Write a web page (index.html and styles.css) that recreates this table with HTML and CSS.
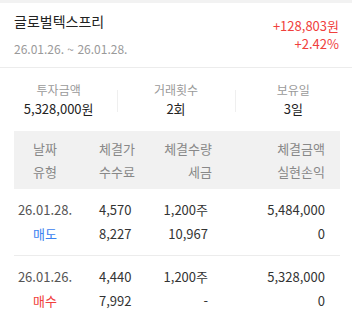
FILE: index.html
```html
<!DOCTYPE html>
<html lang="ko">
<head>
<meta charset="utf-8">
<link rel="stylesheet" href="styles.css">
</head>
<body>
<div class="strip"></div>
<section class="summary">
  <div class="summary-left">
    <div class="name">글로벌텍스프리</div>
    <div class="period">26.01.26. ~ 26.01.28.</div>
  </div>
  <div class="summary-right">
    <div class="profit">+128,803원</div>
    <div class="profit">+2.42%</div>
  </div>
</section>
<section class="stats">
  <div class="stat">
    <div class="stat-label">투자금액</div>
    <div class="stat-value">5,328,000원</div>
  </div>
  <div class="stat">
    <div class="stat-label">거래횟수</div>
    <div class="stat-value">2회</div>
  </div>
  <div class="stat">
    <div class="stat-label">보유일</div>
    <div class="stat-value">3일</div>
  </div>
</section>
<section class="trades">
  <div class="thead">
    <div class="grid">
      <div class="c1">날짜</div><div class="c2">체결가</div><div class="c3 h3">체결수량</div><div class="c4">체결금액</div>
      <div class="c1">유형</div><div class="c2">수수료</div><div class="c3 h3">세금</div><div class="c4">실현손익</div>
    </div>
  </div>
  <div class="trow">
    <div class="grid">
      <div class="c1">26.01.28.</div><div class="c2">4,570</div><div class="c3">1,200주</div><div class="c4">5,484,000</div>
      <div class="c1 sell">매도</div><div class="c2">8,227</div><div class="c3">10,967</div><div class="c4">0</div>
    </div>
  </div>
  <div class="trow">
    <div class="grid">
      <div class="c1">26.01.26.</div><div class="c2">4,440</div><div class="c3">1,200주</div><div class="c4">5,328,000</div>
      <div class="c1 buy">매수</div><div class="c2">7,992</div><div class="c3">-</div><div class="c4">0</div>
    </div>
  </div>
</section>
</body>
</html>
```
FILE: styles.css
```css
* { box-sizing: border-box; }
html, body { margin: 0; padding: 0; background: #fff; }
body {
  font-family: "Noto Sans CJK KR", "Noto Sans", sans-serif;
  color: #333;
  width: 352px;
  overflow: hidden;
}
.strip { height: 3px; background: #f2f2f2; }
.summary {
  display: flex;
  justify-content: space-between;
  height: 65px;
  padding: 0 13px 0 14px;
  border-bottom: 1px solid #ececec;
}
.name {
  font-size: 14px;
  line-height: 20px;
  margin-top: 8px;
  color: #222;
}
.period {
  font-size: 12px;
  line-height: 16px;
  margin-top: 10px;
  color: #9a9a9a;
}
.summary-right {
  text-align: right;
  padding-top: 14px;
}
.profit {
  font-size: 13px;
  line-height: 18px;
  color: #f0403c;
}
.stats {
  display: flex;
  height: 63px;
  padding-top: 13px;
}
.stat {
  flex: 1;
  text-align: center;
  position: relative;
  display: flex;
  flex-direction: column;
  gap: 1px;
}
.stat + .stat::before {
  content: "";
  position: absolute;
  left: 0;
  top: 9px;
  height: 22px;
  width: 1px;
  background: #efefef;
}
.stat-label {
  font-size: 12px;
  line-height: 17px;
  color: #9a9a9a;
}
.stat-value {
  font-size: 13px;
  line-height: 19px;
  color: #222;
}
.trades {
  margin: 0 12px 0 14px;
}
.thead {
  background: #f1f1f1;
  padding: 6px 0;
  color: #888;
}
.grid {
  display: grid;
  grid-template-columns: 62px 70px 62px 1fr;
  grid-auto-rows: 23px;
  align-items: center;
  font-size: 13px;
  padding-right: 15px;
}
.c1 { text-align: center; }
.c2 { padding-left: 23px; }
.c3 { text-align: right; }
.c4 { text-align: right; }
.h3 { margin-right: -4px; }
.trow {
  padding: 8px 0 10px;
  color: #333;
}
.trow .grid { grid-auto-rows: 24px; }
.trow + .trow { border-top: 1px solid #ececec; }
.trow .c1 { color: #555; }
.sell { color: #3b82f0 !important; }
.buy { color: #f0403c !important; }
```
